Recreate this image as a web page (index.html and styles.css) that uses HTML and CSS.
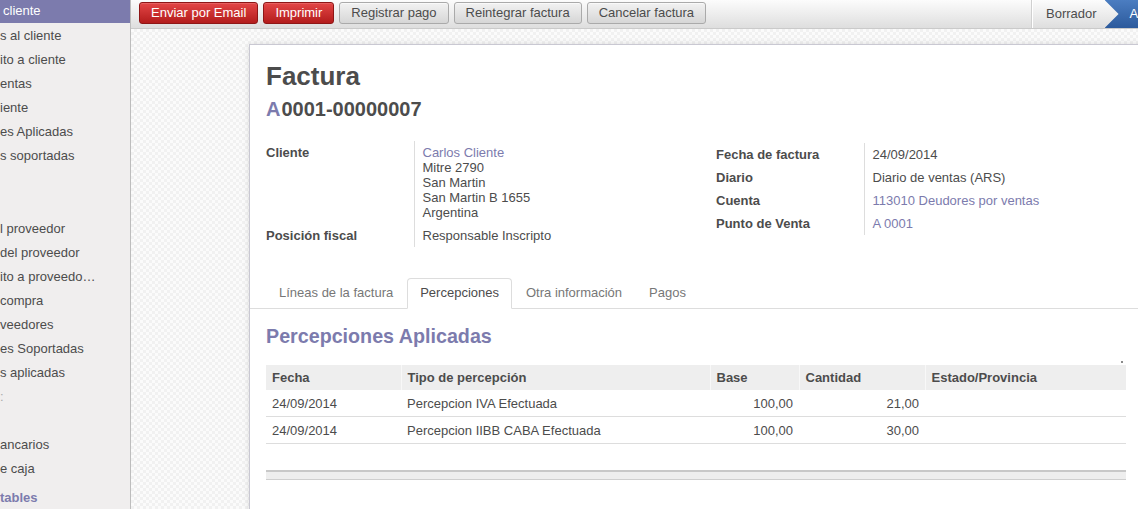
FILE: index.html
```html
<!DOCTYPE html>
<html lang="es">
<head>
<meta charset="utf-8">
<title>Factura</title>
<link rel="stylesheet" href="styles.css">
</head>
<body>
<div class="app">
  <nav class="sidebar">
    <div class="menu-item active">cliente</div>
    <div class="menu-item">s al cliente</div>
    <div class="menu-item">ito a cliente</div>
    <div class="menu-item">entas</div>
    <div class="menu-item">iente</div>
    <div class="menu-item">es Aplicadas</div>
    <div class="menu-item">s soportadas</div>
    <div class="menu-gap"></div>
    <div class="menu-item">l proveedor</div>
    <div class="menu-item">del proveedor</div>
    <div class="menu-item">ito a proveedo…</div>
    <div class="menu-item">compra</div>
    <div class="menu-item">veedores</div>
    <div class="menu-item">es Soportadas</div>
    <div class="menu-item">s aplicadas</div>
    <div class="menu-item faint">:</div>
    <div class="menu-item"></div>
    <div class="menu-item">ancarios</div>
    <div class="menu-item">e caja</div>
    <div class="menu-header">tables</div>
  </nav>
  <main class="main">
    <header class="topbar">
      <div class="buttons">
        <button class="btn btn-primary">Enviar por Email</button>
        <button class="btn btn-primary">Imprimir</button>
        <button class="btn">Registrar pago</button>
        <button class="btn">Reintegrar factura</button>
        <button class="btn">Cancelar factura</button>
      </div>
      <ul class="statusbar">
        <li class="status">Borrador</li>
        <li class="status current">Abierta</li>
      </ul>
    </header>
    <section class="content">
      <div class="sheet">
        <h1 class="title">Factura</h1>
        <h2 class="number"><span class="letter">A</span>0001-00000007</h2>

        <div class="groups">
          <table class="group">
            <tr>
              <td class="label">Cliente</td>
              <td class="value">
                <a class="link">Carlos Cliente</a><br>
                Mitre 2790<br>
                San Martin<br>
                San Martin B 1655<br>
                Argentina
              </td>
            </tr>
            <tr>
              <td class="label">Posición fiscal</td>
              <td class="value">Responsable Inscripto</td>
            </tr>
          </table>
          <table class="group group-right">
            <tr>
              <td class="label">Fecha de factura</td>
              <td class="value">24/09/2014</td>
            </tr>
            <tr>
              <td class="label">Diario</td>
              <td class="value">Diario de ventas (ARS)</td>
            </tr>
            <tr>
              <td class="label">Cuenta</td>
              <td class="value"><a class="link">113010 Deudores por ventas</a></td>
            </tr>
            <tr>
              <td class="label">Punto de Venta</td>
              <td class="value"><a class="link">A 0001</a></td>
            </tr>
          </table>
        </div>

        <ul class="tabs">
          <li class="tab">Líneas de la factura</li>
          <li class="tab active">Percepciones</li>
          <li class="tab">Otra información</li>
          <li class="tab">Pagos</li>
        </ul>

        <h3 class="section-title">Percepciones Aplicadas</h3>
        <div class="pager"><span class="pager-dot"></span></div>

        <table class="list">
          <colgroup>
            <col class="c-fecha"><col class="c-tipo"><col class="c-base"><col class="c-cant"><col class="c-estado">
          </colgroup>
          <thead>
            <tr>
              <th>Fecha</th>
              <th>Tipo de percepción</th>
              <th>Base</th>
              <th>Cantidad</th>
              <th>Estado/Provincia</th>
            </tr>
          </thead>
          <tbody>
            <tr>
              <td>24/09/2014</td>
              <td>Percepcion IVA Efectuada</td>
              <td class="num">100,00</td>
              <td class="num">21,00</td>
              <td></td>
            </tr>
            <tr>
              <td>24/09/2014</td>
              <td>Percepcion IIBB CABA Efectuada</td>
              <td class="num">100,00</td>
              <td class="num">30,00</td>
              <td></td>
            </tr>
            <tr class="filler"><td colspan="5"></td></tr>
          </tbody>
          <tfoot>
            <tr><td colspan="5"></td></tr>
          </tfoot>
        </table>
      </div>
    </section>
  </main>
</div>
</body>
</html>
```

FILE: styles.css
```css
* { box-sizing: border-box; }

html, body {
  margin: 0;
  padding: 0;
  width: 1138px;
  height: 509px;
  overflow: hidden;
  font-family: "Liberation Sans", Arial, sans-serif;
  font-size: 13px;
  color: #4c4c4c;
}

.app {
  display: flex;
  height: 509px;
}

/* Sidebar */
.sidebar {
  width: 131px;
  flex: 0 0 131px;
  background: #f0eeee;
  border-right: 1px solid #bdbdbd;
  overflow: hidden;
  white-space: nowrap;
}

.menu-item {
  height: 24px;
  line-height: 24px;
  padding-left: 0;
  color: #4c4c4c;
}

.menu-item.active {
  height: 23px;
  line-height: 21px;
  margin-bottom: 1px;
  background: #7c7bad;
  color: #ffffff;
  padding-left: 3px;
}

.menu-item.faint { color: #aaa; }

.menu-gap { height: 49px; }

.menu-header {
  margin-top: 5px;
  line-height: 24px;
  font-weight: bold;
  color: #7c7bad;
}

/* Main */
.main {
  flex: 1;
  display: flex;
  flex-direction: column;
  min-width: 0;
  overflow: hidden;
}

.topbar {
  height: 29px;
  flex: 0 0 29px;
  display: flex;
  background: linear-gradient(#fcfcfc, #dedede);
  border-bottom: 1px solid #cacaca;
}

.buttons {
  flex: 1;
  display: flex;
  gap: 5px;
  padding: 2px 0 0 8px;
}

.btn {
  height: 22px;
  padding: 0 11px;
  font-family: "Liberation Sans", Arial, sans-serif;
  font-size: 13px;
  line-height: 20px;
  color: #4c4c4c;
  background: linear-gradient(#f2f2f2, #d6d6d6);
  border: 1px solid #aaaaaa;
  border-radius: 3px;
  box-shadow: inset 0 1px 0 rgba(255,255,255,0.6);
}

.btn-primary {
  color: #ffffff;
  background: linear-gradient(#e34646, #b31c1c);
  border-color: #8e1616;
  box-shadow: inset 0 1px 0 rgba(255,255,255,0.15);
}

.statusbar {
  flex: 0 0 107px;
  width: 107px;
  display: flex;
  margin: 0;
  padding: 0;
  list-style: none;
  overflow: hidden;
  border-left: 1px solid #d0d0d0;
  box-shadow: inset 1px 0 0 #ffffff;
}

.status {
  flex: 0 0 auto;
  height: 28px;
  line-height: 28px;
  padding: 0 8px 0 14px;
  color: #4c4c4c;
  white-space: nowrap;
}

.status.current {
  padding: 0 30px 0 25px;
  color: #ffffff;
  background: linear-gradient(#4b7dc1, #2c5a9c);
  clip-path: polygon(0 0, 100% 0, 100% 100%, 0 100%, 14px 50%);
}

/* Content area */
.content {
  flex: 1;
  padding: 15px 0 0 118px;
  background: repeating-conic-gradient(#f1f1f1 0 25%, #fbfbfb 0 50%) 0 0 / 6px 6px;
  overflow: hidden;
}

.sheet {
  width: 894px;
  min-height: 600px;
  padding: 16px 16px;
  background: #ffffff;
  border: 1px solid #c9c8d2;
  box-shadow: 0 0 6px rgba(0,0,0,0.12);
}

.title {
  margin: 0;
  font-size: 26px;
  line-height: 30px;
  font-weight: bold;
  color: #4c4c4c;
}

.number {
  margin: 6px 0 0;
  font-size: 20px;
  line-height: 24px;
  font-weight: bold;
  color: #4c4c4c;
}

.letter {
  color: #7c7bad;
  margin-right: 1px;
}

.groups {
  display: grid;
  grid-template-columns: 450px 1fr;
  margin-top: 20px;
}

.group {
  border-collapse: collapse;
  align-self: start;
}

.group-right { margin-top: 2px; }

.group td {
  padding: 4px 0;
  line-height: 15px;
  vertical-align: top;
}

.group .label {
  width: 148px;
  font-weight: bold;
}

.group .value {
  padding-left: 8px;
  border-left: 1px solid #dddddd;
}

.link {
  color: #7c7bad;
  text-decoration: none;
}

/* Tabs */
.tabs {
  display: flex;
  list-style: none;
  margin: 31px -16px 0;
  padding: 0 0 0 16px;
  border-bottom: 1px solid #dddddd;
}

.tab {
  padding: 6px 12px 8px;
  margin-right: 1px;
  margin-bottom: -1px;
  line-height: 15px;
  color: #777777;
  border: 1px solid transparent;
  border-radius: 4px 4px 0 0;
}

.tab.active {
  color: #4c4c4c;
  background: #ffffff;
  border-color: #dddddd;
  border-bottom-color: #ffffff;
}

.section-title {
  margin: 15px 0 0;
  font-size: 19.7px;
  line-height: 24px;
  font-weight: bold;
  color: #7c7bad;
}

.pager {
  height: 17px;
  display: flex;
  justify-content: flex-end;
  align-items: flex-end;
  padding-bottom: 2px;
}

.pager-dot {
  width: 2px;
  height: 2px;
  margin-right: 3px;
  background: #8a8a8a;
}

/* List */
.list {
  width: 860px;
  border-collapse: collapse;
  table-layout: fixed;
}

.c-fecha { width: 135px; }
.c-tipo { width: 309px; }
.c-base { width: 89px; }
.c-cant { width: 126px; }
.c-estado { width: 201px; }

.list th {
  height: 25px;
  padding: 5px 6px 5px;
  line-height: 15px;
  text-align: left;
  font-weight: bold;
  background: #eeeeee;
  border-left: 1px solid #f8f8f8;
}

.list th:first-child { border-left: none; }

.list td {
  padding: 6px 6px 5px;
  line-height: 15px;
  white-space: nowrap;
  border-bottom: 1px solid #dddddd;
}

.list td.num { text-align: right; }

.list tr.filler td {
  height: 27px;
  padding: 0;
  border-bottom: none;
}

.list tfoot td {
  height: 9px;
  padding: 0;
  background: #eeeeee;
  border-top: 2px solid #c8c8c8;
  border-bottom: 1px solid #cfcfcf;
}
```
